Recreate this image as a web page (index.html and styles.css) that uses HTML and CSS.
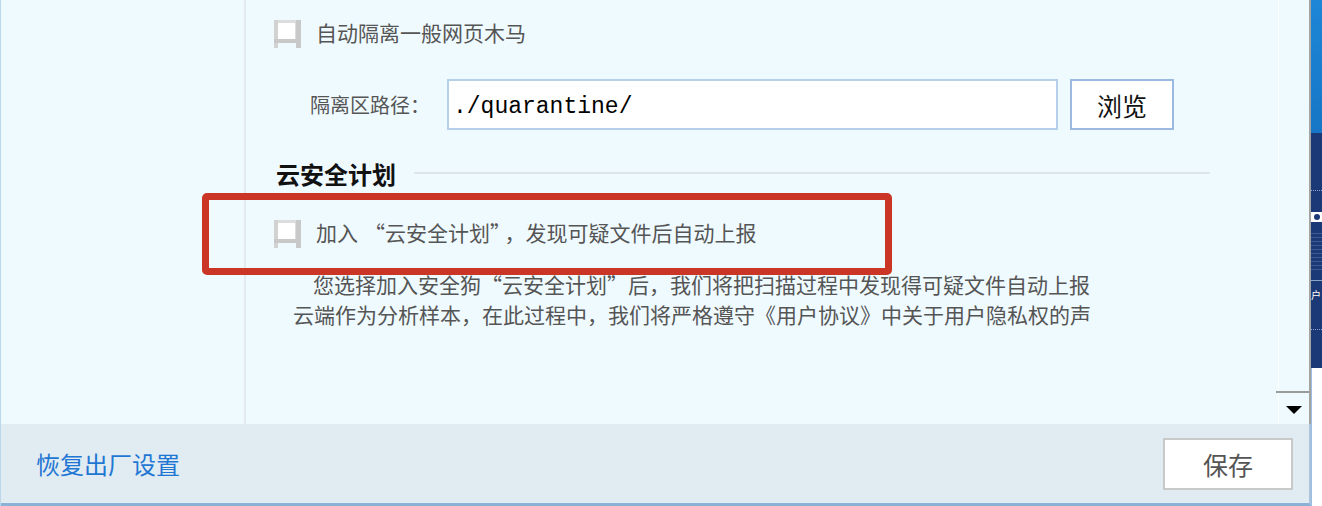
FILE: index.html
```html
<!DOCTYPE html>
<html>
  <head>
    <title>设置 - 云安全计划</title>
    <meta name="viewport" content="width=device-width,initial-scale=1">
    <link rel="stylesheet" href="styles.css">
  </head>
<body>
  <div class="window">
    <div class="dialog">
      <div class="dialog-body">
        <div class="sidebar"></div>
        <div class="content">
          <label class="check-row">
            <span class="checkbox">
              <svg width="28" height="28" viewBox="0 0 28 28">
                <rect x="1.5" y="1.5" width="21" height="19" fill="#fff" stroke="#dcdcdc" stroke-width="3"/>
                <rect x="0" y="0" width="4" height="28" fill="#d2d2d2"/>
                <rect x="22" y="0" width="5" height="28" fill="#c8c8c8"/>
                <rect x="0" y="19" width="27" height="4" fill="#c8c8c8"/>
                <rect x="4" y="23" width="18" height="5" fill="#effaff"/>
              </svg>
            </span>
            <span class="check-text">自动隔离一般网页木马</span>
          </label>

          <div class="path-row">
            <span class="path-label">隔离区路径：</span>
            <div class="path-input">./quarantine/</div>
            <button class="btn-browse">浏览</button>
          </div>

          <div class="section-title">
            <span>云安全计划</span>
            <span class="section-line"></span>
          </div>

          <label class="check-row check-cloud">
            <span class="checkbox">
              <svg width="28" height="28" viewBox="0 0 28 28">
                <rect x="1.5" y="1.5" width="21" height="19" fill="#fff" stroke="#dcdcdc" stroke-width="3"/>
                <rect x="0" y="0" width="4" height="28" fill="#d2d2d2"/>
                <rect x="22" y="0" width="5" height="28" fill="#c8c8c8"/>
                <rect x="0" y="19" width="27" height="4" fill="#c8c8c8"/>
                <rect x="4" y="23" width="18" height="5" fill="#effaff"/>
              </svg>
            </span>
            <span class="check-text">加入<span class="quote-open">“</span>云安全计划<span class="quote-close">”</span>，发现可疑文件后自动上报</span>
          </label>

          <p class="cloud-desc">您选择加入安全狗“云安全计划”后，我们将把扫描过程中发现得可疑文件自动上报云端作为分析样本，在此过程中，我们将严格遵守《用户协议》中关于用户隐私权的声</p>
        </div>
        <div class="scrollbar">
          <div class="scroll-track"></div>
          <div class="scroll-line"></div>
          <div class="scroll-down"><span class="scroll-arrow"></span></div>
        </div>
      </div>
      <div class="footer">
        <a class="reset-link" href="#">恢复出厂设置</a>
        <button class="btn-save">保存</button>
      </div>
    </div>

    <div class="desk">
      <div class="desk-top"></div>
      <div class="desk-navy">
        <div class="desk-dots"></div>
        <div class="desk-bar"><span class="desk-dot"></span></div>
        <div class="desk-lines"></div>
        <div class="desk-rule"></div>
        <div class="desk-char">户</div>
        <div class="desk-dots desk-dots-low"></div>
      </div>
      <div class="desk-white"></div>
    </div>

    <div class="highlight"></div>
  </div>
</body>
</html>
```

FILE: styles.css
```css
html, body {
  margin: 0;
  width: 1322px;
  height: 506px;
  overflow: hidden;
  font-family: "Noto Sans CJK SC", "Noto Sans", sans-serif;
  color: #555;
  background-color: #effaff;
}
button {
  font-family: inherit;
  cursor: pointer;
  padding: 0;
}

.window {
  position: relative;
  display: flex;
  width: 1322px;
  height: 506px;
}

.dialog {
  display: flex;
  flex-direction: column;
  width: 1311px;
  flex: 0 0 auto;
  box-sizing: border-box;
  border-left: 1px solid #bcd6ec;
}
.dialog-body {
  display: flex;
  height: 424px;
  background-color: #effaff;
}
.sidebar {
  width: 243px;
  flex: 0 0 auto;
  border-right: 2px solid #e3e9ec;
}

.content {
  flex: 1;
  display: flex;
  flex-direction: column;
  min-width: 0;
}

.check-row {
  display: flex;
  align-items: center;
  height: 28px;
  margin: 20px 0 0 28px;
  font-size: 21px;
  line-height: 28px;
}
.check-cloud {
  margin-top: 32px;
}
.checkbox {
  display: flex;
  width: 28px;
  height: 28px;
  margin-right: 14px;
}
.check-text {
  color: #555;
  white-space: nowrap;
  position: relative;
  top: -2px;
}
.quote-open {
  padding-left: 6px;
}
.quote-close {
  padding-right: 4px;
}

.path-row {
  display: flex;
  align-items: center;
  margin: 31px 0 0 64px;
  height: 51px;
}
.path-label {
  font-size: 20px;
  color: #555;
  margin-right: 17px;
  white-space: nowrap;
  flex: 0 0 auto;
}
.path-input {
  width: 611px;
  height: 51px;
  flex: 0 0 auto;
  box-sizing: border-box;
  border: 2px solid #b6d0ea;
  background-color: #fff;
  font-family: "Liberation Mono", monospace;
  font-size: 23px;
  line-height: 47px;
  color: #000;
  padding: 3px 0 0 4px;
}
.btn-browse {
  width: 104px;
  height: 51px;
  flex: 0 0 auto;
  margin-left: 12px;
  border: 2px solid #9cb9e2;
  background-color: #fff;
  font-size: 25px;
  color: #111;
}

.section-title {
  display: flex;
  align-items: center;
  margin: 28px 68px 0 30px;
  height: 30px;
  font-size: 24px;
  font-weight: 700;
  color: #111;
}
.section-line {
  flex: 1;
  height: 2px;
  margin-left: 18px;
  background-color: #dde4e7;
}

.cloud-desc {
  width: 800px;
  margin: 21px 0 0 47px;
  text-indent: 20px;
  font-size: 21px;
  line-height: 30px;
  color: #555;
}

.scrollbar {
  width: 30px;
  flex: 0 0 auto;
  display: flex;
  flex-direction: column;
  border-left: 1px solid #fff;
  border-right: 2px solid #a3a3a3;
}
.scroll-track {
  height: 391px;
}
.scroll-line {
  height: 2px;
  margin-left: -3px;
  background-color: #9a9a9a;
}
.scroll-down {
  flex: 1;
  display: flex;
  justify-content: center;
  padding-top: 13px;
  box-sizing: border-box;
}
.scroll-arrow {
  width: 0;
  height: 0;
  border-left: 8px solid transparent;
  border-right: 8px solid transparent;
  border-top: 8px solid #000;
}

.footer {
  flex: 1;
  display: flex;
  align-items: center;
  justify-content: space-between;
  padding: 0 16px 0 35px;
  background-color: #e1ebf2;
  border-bottom: 3px solid #8db0d6;
  border-right: 2px solid #a9c3dd;
}
.reset-link {
  font-size: 24px;
  color: #1f77d3;
  text-decoration: none;
}
.btn-save {
  width: 130px;
  height: 52px;
  border: 2px solid #c9c9c9;
  background-color: #fff;
  font-size: 25px;
  color: #555;
}

.desk {
  flex: 1;
  display: flex;
  flex-direction: column;
  overflow: hidden;
}
.desk-top {
  height: 133px;
  background: linear-gradient(#1d86d6, #1776c6);
}
.desk-navy {
  height: 235px;
  background-color: #1b3977;
  display: flex;
  flex-direction: column;
}
.desk-dots {
  height: 1px;
  margin-top: 57px;
  border-top: 1px dotted #8fa3c7;
}
.desk-dots-low {
  margin-top: 22px;
}
.desk-bar {
  height: 10px;
  margin-top: 20px;
  background-color: #fff;
  display: flex;
  align-items: center;
}
.desk-dot {
  width: 6px;
  height: 6px;
  margin-left: 3px;
  border-radius: 50%;
  background-color: #1b3977;
}
.desk-lines {
  height: 40px;
  margin-top: 8px;
  background: repeating-linear-gradient(#1b3977 0 3px, #3d5a94 3px 4px);
}
.desk-rule {
  height: 1px;
  margin-top: 10px;
  background-color: #8fa3c7;
}
.desk-char {
  font-size: 10px;
  line-height: 24px;
  color: #fff;
  margin-top: 2px;
}
.desk-white {
  flex: 1;
  background-color: #fff;
  border-left: 1px solid #9cbde0;
}

.highlight {
  position: absolute;
  left: 202px;
  top: 193px;
  width: 690px;
  height: 82px;
  box-sizing: border-box;
  border: 7px solid #cb3526;
  border-radius: 5px;
  pointer-events: none;
}
```
